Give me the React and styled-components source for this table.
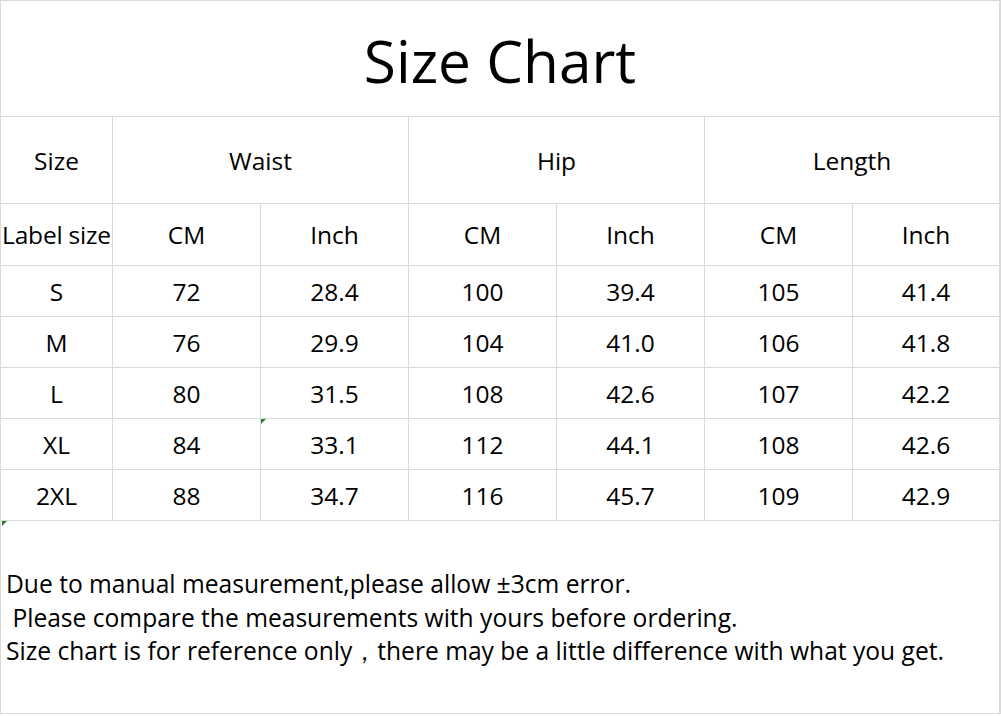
import React from 'react'
import styled, {createGlobalStyle} from 'styled-components'

const GlobalStyle = createGlobalStyle`
  html, body {
    margin: 0;
    padding: 0;
    background: #fff;
  }
  body {
    font-family: "Open Sans", "Noto Sans", sans-serif;
    color: #000;
  }
`;

const Sheet = styled.div`
  width: 1000px;
  display: grid;
  grid-template-columns: 111px repeat(5, 147px) 146px;
  grid-template-rows: 115px 86px 61px repeat(5, 50px) 192px;
  gap: 1px;
  background: #dadada;
  border: 1px solid #dadada;
`;

const Cell = styled.div`
  position: relative;
  background: #fff;
  display: flex;
  align-items: center;
  justify-content: center;
  font-size: 24.5px;
  white-space: nowrap;
  grid-column: ${p => p.span ? `span ${p.span}` : 'auto'};
  letter-spacing: ${p => p.tight ? '-0.2px' : '0'};
`;

const Title = styled(Cell)`
  grid-column: 1 / -1;
  font-size: 58.5px;
  padding-top: 2px;
`;

const Note = styled.div`
  position: relative;
  grid-column: 1 / -1;
  background: #fff;
  padding: 46px 0 0 5px;
  font-size: 24.6px;
  line-height: 33.5px;
  white-space: pre;
`;

const Flag = styled.span`
  position: absolute;
  left: ${p => p.left}px;
  top: ${p => p.top}px;
  width: 0;
  height: 0;
  border-top: 5px solid #2e7d32;
  border-right: 5px solid transparent;
`;

const rows = [
  ['S', '72', '28.4', '100', '39.4', '105', '41.4'],
  ['M', '76', '29.9', '104', '41.0', '106', '41.8'],
  ['L', '80', '31.5', '108', '42.6', '107', '42.2'],
  ['XL', '84', '33.1', '112', '44.1', '108', '42.6'],
  ['2XL', '88', '34.7', '116', '45.7', '109', '42.9'],
]

export default function App() {
  return (
    <>
      <GlobalStyle />
      <Sheet>
        <Title>Size Chart</Title>

        <Cell>Size</Cell>
        <Cell span={2}>Waist</Cell>
        <Cell span={2}>Hip</Cell>
        <Cell span={2}>Length</Cell>

        <Cell tight>Label size</Cell>
        <Cell>CM</Cell>
        <Cell>Inch</Cell>
        <Cell>CM</Cell>
        <Cell>Inch</Cell>
        <Cell>CM</Cell>
        <Cell>Inch</Cell>

        {rows.map((r, i) =>
          r.map((v, j) => (
            <Cell key={i + '-' + j}>
              {v}
              {i === 3 && j === 2 && <Flag left={0} top={0} />}
            </Cell>
          ))
        )}

        <Note>
          <Flag left={1} top={0} />
          {'Due to manual measurement,please allow ±3cm error.\n Please compare the measurements with yours before ordering.\nSize chart is for reference only，there may be a little difference with what you get.'}
        </Note>
      </Sheet>
    </>
  )
}
